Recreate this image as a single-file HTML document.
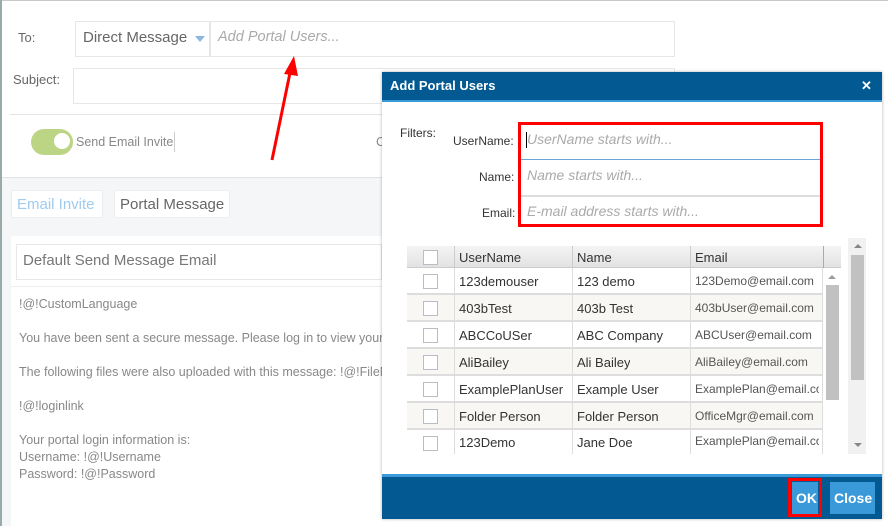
<!DOCTYPE html>
<html><head><meta charset="utf-8"><style>
*{box-sizing:border-box;margin:0;padding:0}
body{width:888px;height:526px;overflow:hidden;background:#fff;font-family:"Liberation Sans",sans-serif;position:relative;color:#555}
.a{position:absolute}
.t{font-size:13px;color:#666}
.cb{position:absolute;width:15px;height:15px;border:1px solid #b8bcc6;background:#fff}
.cell{position:absolute;font-size:13px;color:#333;white-space:nowrap;overflow:hidden}
</style></head><body>
<div class="a" style="left:0;top:0;width:888px;height:1px;background:#c8c8c8"></div>
<div class="a" style="left:0;top:0;width:2px;height:526px;background:#9aa"></div>
<div class="a t" style="left:18px;top:30px">To:</div>
<div class="a" style="left:75px;top:21px;width:135px;height:36px;border:1px solid #e6e6e6"></div>
<div class="a" style="left:83px;top:29px;font-size:15px;color:#666">Direct Message</div>
<div class="a" style="left:195px;top:36px;border-left:5px solid transparent;border-right:5px solid transparent;border-top:6px solid #8ab8e0"></div>
<div class="a" style="left:210px;top:21px;width:465px;height:36px;border:1px solid #e6e6e6"></div>
<div class="a" style="left:218px;top:29px;font-size:14.5px;color:#aaa;font-style:italic">Add Portal Users...</div>
<div class="a t" style="left:13px;top:72px">Subject:</div>
<div class="a" style="left:73px;top:68px;width:602px;height:36px;border:1px solid #e6e6e6"></div>
<div class="a" style="left:10px;top:114px;width:400px;height:1px;background:#e4e4e4"></div>
<div class="a" style="left:31px;top:129px;width:42px;height:26px;border-radius:13px;background:#bcd585"></div>
<div class="a" style="left:54px;top:133px;width:16px;height:16px;border-radius:8px;background:#fff"></div>
<div class="a" style="left:76px;top:135px;font-size:12.5px;color:#888">Send Email Invite</div>
<div class="a" style="left:174px;top:132px;width:1px;height:20px;background:#ccc"></div>
<div class="a" style="left:2px;top:177px;width:380px;height:349px;background:#f5f6f8;border-top:1px solid #e2e2e2"></div>
<div class="a" style="left:11px;top:190px;width:92px;height:28px;background:#fff;border:1px solid #eee"></div>
<div class="a" style="left:17px;top:196px;font-size:15px;color:#9ecbef">Email Invite</div>
<div class="a" style="left:114px;top:190px;width:116px;height:28px;background:#fff;border:1px solid #eee"></div>
<div class="a" style="left:120px;top:196px;font-size:15px;color:#666">Portal Message</div>
<div class="a" style="left:11px;top:236px;width:371px;height:290px;background:#fff"></div>
<div class="a" style="left:16px;top:244px;width:366px;height:36px;border:1px solid #e8e8e8"></div>
<div class="a" style="left:23px;top:252px;font-size:15px;color:#777">Default Send Message Email</div>
<div class="a" style="left:11px;top:286px;width:371px;height:1px;background:#eee"></div>
<div class="a" style="left:19px;top:296px;font-size:12.5px;color:#888;line-height:17px;white-space:nowrap">!@!CustomLanguage<br><br>You have been sent a secure message. Please log in to view your<br><br>The following files were also uploaded with this message: !@!FileN<br><br>!@!loginlink<br><br>Your portal login information is:<br>Username: !@!Username<br>Password: !@!Password</div>
<div class="a" style="left:376px;top:134px;font-size:13px;color:#888">C</div>
<svg class="a" style="left:0;top:0" width="888" height="526"><line x1="272" y1="160" x2="291" y2="68" stroke="#f00" stroke-width="3"/><polygon points="284,74 294,56 298,76" fill="#f00"/>
<line x1="464" y1="175" x2="438" y2="224" stroke="#f00" stroke-width="2.5"/><polygon points="432,217 435,236 444,222" fill="#f00"/></svg>
<div class="a" style="left:382px;top:72px;width:500px;height:447px;background:#fff;box-shadow:0 0 3px rgba(0,0,0,.3)"></div>
<div class="a" style="left:382px;top:72px;width:500px;height:30px;background:#035a93;border-bottom:2px solid #3a9ad9"></div>
<div class="a" style="left:390px;top:78px;font-size:13px;font-weight:bold;color:#fff">Add Portal Users</div>
<div class="a" style="left:861px;top:78px;font-size:13px;font-weight:bold;color:#fff">✕</div>
<div class="a" style="left:400px;top:126px;font-size:12px;color:#333">Filters:</div>
<div class="a" style="left:453px;top:134px;font-size:12px;color:#333">UserName:</div>
<div class="a" style="left:479px;top:170px;font-size:12px;color:#333">Name:</div>
<div class="a" style="left:482px;top:206px;font-size:12px;color:#333">Email:</div>
<div class="a" style="left:521px;top:159px;width:299px;height:1px;background:#6aa6d8"></div>
<div class="a" style="left:521px;top:195px;width:299px;height:2px;background:#ddd"></div>
<div class="a" style="left:526px;top:132px;width:1px;height:16px;background:#000"></div>
<div class="a" style="left:527px;top:131px;font-size:14px;font-style:italic;color:#aaa">UserName starts with...</div>
<div class="a" style="left:527px;top:167px;font-size:14px;font-style:italic;color:#aaa">Name starts with...</div>
<div class="a" style="left:527px;top:203px;font-size:14px;font-style:italic;color:#aaa">E-mail address starts with...</div>
<div class="a" style="left:518px;top:122px;width:305px;height:105px;border:3px solid #f00"></div>
<div class="a" style="left:407px;top:246px;width:434px;height:22px;background:linear-gradient(#f4f4f4,#e2e2e2);border-bottom:1px solid #ccc"></div>
<div class="cb" style="left:423px;top:250px"></div>
<div class="cell" style="left:459px;top:250px">UserName</div>
<div class="cell" style="left:577px;top:250px">Name</div>
<div class="cell" style="left:695px;top:250px">Email</div>
<div class="a" style="left:454px;top:246px;width:1px;height:208px;background:#ccc"></div>
<div class="a" style="left:572px;top:246px;width:1px;height:208px;background:#ccc"></div>
<div class="a" style="left:690px;top:246px;width:1px;height:208px;background:#ccc"></div>
<div class="a" style="left:823px;top:246px;width:1px;height:22px;background:#aaa"></div>
<div class="a" style="left:407px;top:268px;width:416px;height:186px;background:
repeating-linear-gradient(#fff 0 25px,#ddd 25px 27px,#f8f7f3 27px 52px,#ddd 52px 54px)"></div>
<div class="a" style="left:824px;top:268px;width:17px;height:186px;background:#fff"></div>
<div class="a" style="left:826px;top:285px;width:13px;height:115px;background:#c1c1c1"></div>
<div class="a" style="left:848px;top:238px;width:18px;height:216px;background:#f1f1f1"></div>
<div class="a" style="left:851px;top:255px;width:13px;height:125px;background:#c1c1c1"></div>
<div class="a" style="left:854px;top:244px;border-left:4px solid transparent;border-right:4px solid transparent;border-bottom:4px solid #888"></div>
<div class="a" style="left:854px;top:443px;border-left:4px solid transparent;border-right:4px solid transparent;border-top:4px solid #888"></div>
<div class="a" style="left:828px;top:275px;border-left:4px solid transparent;border-right:4px solid transparent;border-bottom:4px solid #999"></div>
<div class="a" style="left:454px;top:268px;width:1px;height:186px;background:#ddd"></div>
<div class="a" style="left:572px;top:268px;width:1px;height:186px;background:#ddd"></div>
<div class="a" style="left:690px;top:268px;width:1px;height:186px;background:#ddd"></div>
<div class="a" style="left:822px;top:268px;width:1px;height:186px;background:#ddd"></div>
<div class="cb" style="left:423px;top:274px"></div><div class="cell" style="left:459px;top:274px">123demouser</div><div class="cell" style="left:577px;top:274px">123 demo</div><div class="cell" style="left:695px;top:274px;font-size:12px;color:#555">123Demo@email.com</div>
<div class="cb" style="left:423px;top:301px"></div><div class="cell" style="left:459px;top:301px">403bTest</div><div class="cell" style="left:577px;top:301px">403b Test</div><div class="cell" style="left:695px;top:301px;font-size:12px;color:#555">403bUser@email.com</div>
<div class="cb" style="left:423px;top:328px"></div><div class="cell" style="left:459px;top:328px">ABCCoUSer</div><div class="cell" style="left:577px;top:328px">ABC Company</div><div class="cell" style="left:695px;top:328px;font-size:12px;color:#555">ABCUser@email.com</div>
<div class="cb" style="left:423px;top:355px"></div><div class="cell" style="left:459px;top:355px">AliBailey</div><div class="cell" style="left:577px;top:355px">Ali Bailey</div><div class="cell" style="left:695px;top:355px;font-size:12px;color:#555">AliBailey@email.com</div>
<div class="cb" style="left:423px;top:382px"></div><div class="cell" style="left:459px;top:382px">ExamplePlanUser</div><div class="cell" style="left:577px;top:382px">Example User</div><div class="cell" style="left:695px;top:382px;font-size:12px;color:#555;width:124px">ExamplePlan@email.com</div>
<div class="cb" style="left:423px;top:409px"></div><div class="cell" style="left:459px;top:409px">Folder Person</div><div class="cell" style="left:577px;top:409px">Folder Person</div><div class="cell" style="left:695px;top:409px;font-size:12px;color:#555">OfficeMgr@email.com</div>
<div class="cb" style="left:423px;top:436px"></div><div class="cell" style="left:459px;top:435px">123Demo</div><div class="cell" style="left:577px;top:435px">Jane Doe</div><div class="cell" style="left:695px;top:434px;font-size:12px;color:#555;width:124px">ExamplePlan@email.com</div>
<div class="a" style="left:382px;top:474px;width:500px;height:45px;background:#035a93;border-top:3px solid #3a9ad9"></div>
<div class="a" style="left:792px;top:482px;width:26px;height:32px;background:#3a9ad9"></div>
<div class="a" style="left:796px;top:490px;font-size:14px;font-weight:bold;color:#fff">OK</div>
<div class="a" style="left:788px;top:478px;width:34px;height:39px;border:3px solid #f00"></div>
<div class="a" style="left:830px;top:482px;width:45px;height:32px;background:#3a9ad9"></div>
<div class="a" style="left:834px;top:490px;font-size:14px;font-weight:bold;color:#fff">Close</div>
</body></html>
